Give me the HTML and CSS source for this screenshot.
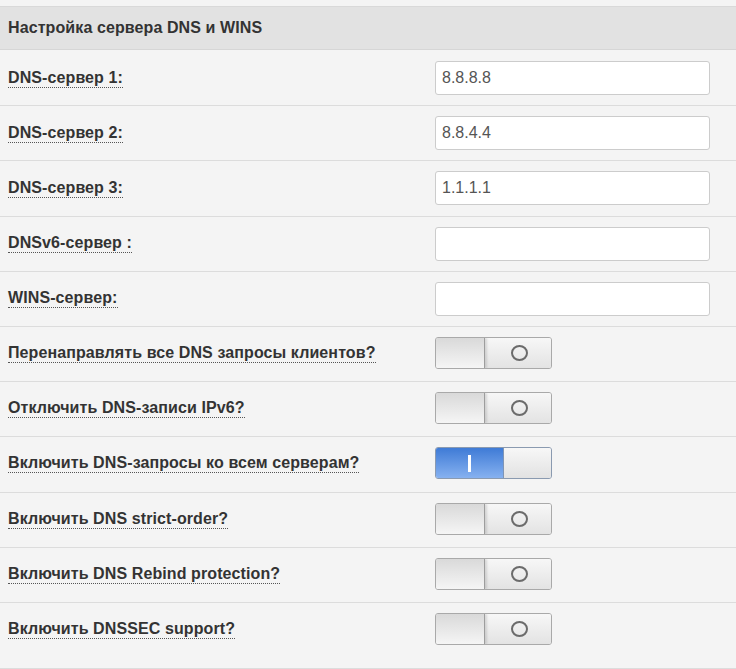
FILE: index.html
```html
<!DOCTYPE html>
<html lang="ru">
<head>
<meta charset="utf-8">
<link rel="stylesheet" href="styles.css">
</head>
<body>
<div class="panel">
  <div class="header">Настройка сервера DNS и WINS</div>

  <div class="row row-first">
    <span class="label">DNS-сервер 1:</span>
    <input class="field" type="text" value="8.8.8.8">
  </div>
  <div class="row">
    <span class="label">DNS-сервер 2:</span>
    <input class="field" type="text" value="8.8.4.4">
  </div>
  <div class="row">
    <span class="label">DNS-сервер 3:</span>
    <input class="field" type="text" value="1.1.1.1">
  </div>
  <div class="row">
    <span class="label">DNSv6-сервер :</span>
    <input class="field" type="text" value="">
  </div>
  <div class="row">
    <span class="label">WINS-сервер:</span>
    <input class="field" type="text" value="">
  </div>

  <div class="row row-toggle">
    <span class="label">Перенаправлять все DNS запросы клиентов?</span>
    <div class="toggle off"><span class="handle"></span><span class="track"><span class="ring"></span></span></div>
  </div>
  <div class="row row-toggle">
    <span class="label">Отключить DNS-записи IPv6?</span>
    <div class="toggle off"><span class="handle"></span><span class="track"><span class="ring"></span></span></div>
  </div>
  <div class="row row-toggle">
    <span class="label">Включить DNS-запросы ко всем серверам?</span>
    <div class="toggle on"><span class="track-on"><span class="bar"></span></span><span class="handle-on"></span></div>
  </div>
  <div class="row row-toggle">
    <span class="label">Включить DNS strict-order?</span>
    <div class="toggle off"><span class="handle"></span><span class="track"><span class="ring"></span></span></div>
  </div>
  <div class="row row-toggle">
    <span class="label">Включить DNS Rebind protection?</span>
    <div class="toggle off"><span class="handle"></span><span class="track"><span class="ring"></span></span></div>
  </div>
  <div class="row row-toggle row-last">
    <span class="label">Включить DNSSEC support?</span>
    <div class="toggle off"><span class="handle"></span><span class="track"><span class="ring"></span></span></div>
  </div>
</div>
</body>
</html>
```
FILE: styles.css
```css
html, body {
  margin: 0;
  padding: 0;
  background: #f4f4f4;
}

body {
  font-family: "Liberation Sans", Arial, sans-serif;
  color: #333;
}

.panel {
  padding-top: 6px;
}

.header {
  height: 44px;
  box-sizing: border-box;
  background: #e2e2e2;
  border-top: 1px solid #d9d9d9;
  border-bottom: 1px solid #d6d6d6;
  padding-left: 8px;
  display: flex;
  align-items: center;
  font-size: 16px;
  font-weight: bold;
  color: #333;
  letter-spacing: 0.1px;
}

.row {
  display: grid;
  grid-template-columns: 427px 275px;
  align-items: center;
  padding: 10px 0 10.2px 8px;
  height: 34px;
  border-bottom: 1px solid #dcdcdc;
}

.row-first {
  padding-top: 11px;
}

.row-toggle {
  padding: 10px 0 12.2px 8px;
  height: 32px;
  align-items: start;
}

.row-toggle .label {
  margin-top: 7px;
}

.row-last {
  padding-bottom: 23px;
}

.label {
  justify-self: start;
  font-size: 16px;
  font-weight: bold;
  color: #333;
  line-height: 18px;
  letter-spacing: 0.1px;
  border-bottom: 1px dotted #555;
}

.field {
  box-sizing: border-box;
  width: 275px;
  height: 34px;
  margin: 0;
  padding: 0 6px;
  border: 1px solid #cccccc;
  border-radius: 3px;
  background: #fff;
  font-family: "Liberation Sans", Arial, sans-serif;
  font-size: 16px;
  color: #555;
  outline: none;
}

.toggle {
  display: flex;
  box-sizing: border-box;
  width: 117px;
  height: 32px;
  border: 1px solid #a9a9a9;
  border-radius: 3px;
  overflow: hidden;
  box-shadow: inset 0 1px 1px rgba(0,0,0,0.08);
}

.handle {
  width: 48px;
  height: 100%;
  background: linear-gradient(#d9d9d9, #f5f5f5);
  border-right: 1px solid #9d9d9d;
  box-shadow: 2px 0 2px rgba(0,0,0,0.12);
  position: relative;
  z-index: 1;
}

.track {
  flex: 1;
  display: flex;
  align-items: center;
  justify-content: center;
  background: linear-gradient(#f7f7f7, #e3e3e3);
}

.ring {
  box-sizing: border-box;
  width: 17px;
  height: 16px;
  border: 2px solid #6b6b6b;
  border-radius: 50%;
  margin-left: 2px;
}

.toggle.on {
  border-color: #8a9ab0;
}

.track-on {
  width: 67px;
  height: 100%;
  display: flex;
  align-items: center;
  justify-content: center;
  background: linear-gradient(#3f7bd6, #86b1f0);
  border-right: 1px solid #7f95b5;
}

.bar {
  width: 3px;
  height: 17px;
  background: #fff;
}

.handle-on {
  flex: 1;
  background: linear-gradient(#f7f7f7, #e2e2e2);
}
```
